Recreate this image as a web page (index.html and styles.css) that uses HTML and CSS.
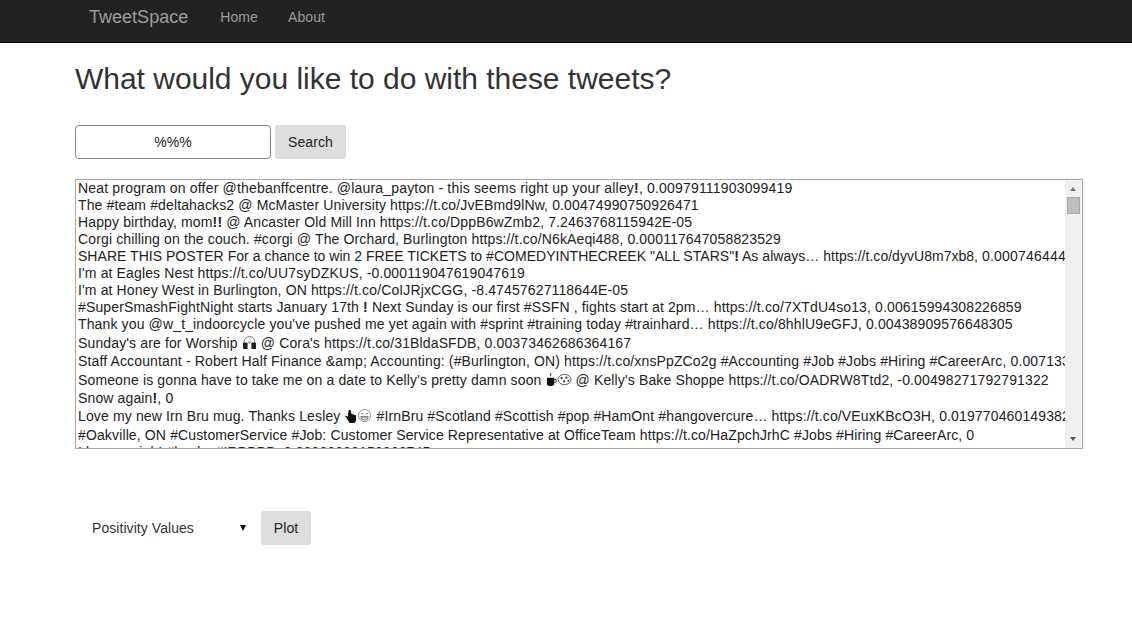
FILE: index.html
```html
<!DOCTYPE html>
<html lang="en">
<head>
<meta charset="utf-8">
<title>TweetSpace</title>
<link rel="stylesheet" href="styles.css">
</head>
<body>
<nav class="navbar">
  <a class="brand">TweetSpace</a>
  <a class="nav-link">Home</a>
  <a class="nav-link">About</a>
</nav>
<main class="container">
  <h1 class="title">What would you like to do with these tweets?</h1>
  <form class="search-row">
    <input class="search-input" type="text" value="%%%">
    <button class="btn" type="button">Search</button>
  </form>
  <section class="tweets-box">
    <div class="tweets">
      <div class="line wide">Neat program on offer @thebanffcentre. @laura_payton - this seems right up your alley<b>!</b>, 0.00979111903099419</div>
      <div class="line">The #team #deltahacks2 @ McMaster University https://t.co/JvEBmd9lNw, 0.00474990750926471</div>
      <div class="line">Happy birthday, mom<b>!!</b> @ Ancaster Old Mill Inn https://t.co/DppB6wZmb2, 7.2463768115942E-05</div>
      <div class="line">Corgi chilling on the couch. #corgi @ The Orchard, Burlington https://t.co/N6kAeqi488, 0.000117647058823529</div>
      <div class="line caps">SHARE THIS POSTER For a chance to win 2 FREE TICKETS to #COMEDYINTHECREEK "ALL STARS"<b>!</b> As always… https://t.co/dyvU8m7xb8, <span class="digits">0.00074644466</span></div>
      <div class="line">I'm at Eagles Nest https://t.co/UU7syDZKUS, -0.000119047619047619</div>
      <div class="line">I'm at Honey West in Burlington, ON https://t.co/CoIJRjxCGG, -8.47457627118644E-05</div>
      <div class="line">#SuperSmashFightNight starts January 17th <b>!</b> Next Sunday is our first #SSFN , fights start at 2pm… https://t.co/7XTdU4so13, 0.00615994308226859</div>
      <div class="line">Thank you @w_t_indoorcycle you've pushed me yet again with #sprint #training today #trainhard… https://t.co/8hhlU9eGFJ, 0.00438909576648305</div>
      <div class="line tall">Sunday's are for Worship <svg class="emoji" viewBox="0 0 16 16"><path d="M2.500 10V7a5.500 5.500 0 0 1 11 0v3" fill="none" stroke="#777" stroke-width="1"/><rect x="1" y="8" width="5" height="7" rx="1" fill="#222"/><rect x="10" y="8" width="5" height="7" rx="1" fill="#222"/><circle cx="8" cy="8" r="1.500" fill="#aaa"/></svg> @ Cora's https://t.co/31BldaSFDB, 0.00373462686364167</div>
      <div class="line">Staff Accountant - Robert Half Finance &amp;amp; Accounting: (#Burlington, ON) https://t.co/xnsPpZCo2g #Accounting #Job #Jobs #Hiring #CareerArc, 0.007133333</div>
      <div class="line tall">Someone is gonna have to take me on a date to Kelly's pretty damn soon <svg class="emoji mug" viewBox="0 0 12 16"><path d="M1 6h8v6a3 3 0 0 1-3 3H4a3 3 0 0 1-3-3z" fill="#111"/><path d="M9 8h2v3H9" fill="none" stroke="#222"/><path d="M5 1v3" stroke="#555" stroke-width="1.500"/></svg><svg class="emoji" viewBox="0 0 16 16"><ellipse cx="8" cy="8" rx="7" ry="5.500" fill="#fff" stroke="#555"/><circle cx="5" cy="6.500" r="1.200" fill="#333"/><circle cx="10" cy="6" r="1.200" fill="#333"/><circle cx="7.500" cy="10" r="1.200" fill="#333"/><circle cx="12" cy="9.500" r="1" fill="#333"/></svg> @ Kelly's Bake Shoppe https://t.co/OADRW8Ttd2, -0.00498271792791322</div>
      <div class="line">Snow again<b>!</b>, 0</div>
      <div class="line tall love">Love my new Irn Bru mug. Thanks Lesley <svg class="emoji hand" viewBox="0 0 14 16"><path d="M1 8l3 1 1-7 2 0 1 4 5 2v6l-2 2H6z" fill="#111"/></svg><svg class="emoji" viewBox="0 0 16 16"><circle cx="8" cy="8" r="6.500" fill="#fff" stroke="#888"/><path d="M4.500 6h2M9.500 6h2" stroke="#666"/><path d="M4 9h8a4 4 0 0 1-8 0zM4.500 10.500h7" fill="#fff" stroke="#777"/></svg> #IrnBru #Scotland #Scottish #pop #HamOnt #hangovercure… https://t.co/VEuxKBcO3H, 0.019770460149382</div>
      <div class="line">#Oakville, ON #CustomerService #Job: Customer Service Representative at OfficeTeam https://t.co/HaZpchJrhC #Jobs #Hiring #CareerArc, 0</div>
      <div class="line">I love my job! #hacks #IRBBBB, 0.00980392156862745</div>
    </div>
    <div class="scrollbar">
      <span class="arrow up"></span>
      <span class="thumb"></span>
      <span class="arrow down"></span>
    </div>
  </section>
  <form class="plot-row">
    <div class="select"><span>Positivity Values</span><span class="caret"></span></div>
    <button class="btn plot" type="button">Plot</button>
  </form>
</main>
</body>
</html>
```
FILE: styles.css
```css
* { box-sizing: border-box; }
html, body { margin: 0; padding: 0; }
body {
  background: #fff;
  color: #333;
  font-family: "Liberation Sans", Arial, sans-serif;
  font-size: 14px;
  line-height: 20px;
}
.navbar {
  height: 43px;
  background: #222;
  border-bottom: 1px solid #080808;
  display: flex;
  align-items: center;
  padding: 0 0 9px 89px;
}
.brand { color: #9d9d9d; font-size: 18px; margin-right: 32px; letter-spacing: .02px; }
.nav-link { color: #9d9d9d; font-size: 14px; margin-right: 30px; letter-spacing: .1px; }
.container { padding: 0 49px 0 75px; }
.title {
  margin: 19px 0 0;
  font-size: 30px;
  line-height: 33px;
  font-weight: 400;
  color: #333;
  letter-spacing: -.02px;
}
.search-row { display: flex; gap: 4px; margin-top: 30px; height: 34px; }
.search-input {
  width: 196px;
  height: 34px;
  border: 1px solid #858585;
  border-radius: 4px;
  background: #fff;
  text-align: center;
  font: 14px "Liberation Sans", Arial, sans-serif;
  color: #222;
  padding: 0 12px;
}
.btn {
  border: 0;
  border-radius: 3px;
  background: #ddd;
  color: #222;
  font: 14px "Liberation Sans", Arial, sans-serif;
  letter-spacing: .1px;
  padding: 0 13px;
  height: 34px;
}
.tweets-box {
  position: relative;
  margin-top: 20px;
  height: 270px;
  width: 1008px;
  border: 1px solid #a9a9a9;
  overflow: hidden;
}
.tweets { padding: 0 17px 0 2px; height: 100%; overflow: hidden; color: #222; }
.line { white-space: nowrap; overflow: hidden; height: 17px; line-height: 16px; letter-spacing: .135px; }
.line.wide { letter-spacing: .18px; }
.line.caps { letter-spacing: .03px; }
.line.tall { height: 20px; line-height: 20px; }
.line.love { line-height: 18px; }
.digits { letter-spacing: .2px; }
.emoji { width: 15px; height: 15px; vertical-align: -2px; }
.emoji.mug { width: 11px; }
.emoji.hand { width: 13px; }
.scrollbar {
  position: absolute;
  top: 0;
  right: 0;
  bottom: 0;
  width: 17px;
  background: #f0f0f0;
}
.thumb {
  position: absolute;
  top: 17px;
  left: 2px;
  width: 13px;
  height: 17px;
  background: #bdbdbd;
  border: 1px solid #a8a8a8;
}
.arrow { position: absolute; left: 5px; width: 0; height: 0; border-left: 3.500px solid transparent; border-right: 3.500px solid transparent; }
.arrow.up { top: 7px; border-bottom: 4px solid #777; }
.arrow.down { bottom: 7px; border-top: 4px solid #555; }
.plot-row { display: flex; gap: 4px; margin-top: 62px; height: 34px; align-items: center; }
.select {
  width: 182px;
  height: 34px;
  display: flex;
  align-items: center;
  justify-content: space-between;
  padding: 0 11px 0 17px;
  color: #333;
  letter-spacing: .06px;
}
.caret { width: 0; height: 0; border-left: 3.500px solid transparent; border-right: 3.500px solid transparent; border-top: 6px solid #111; }
.plot { padding: 0 12px; width: 50px; }
```
